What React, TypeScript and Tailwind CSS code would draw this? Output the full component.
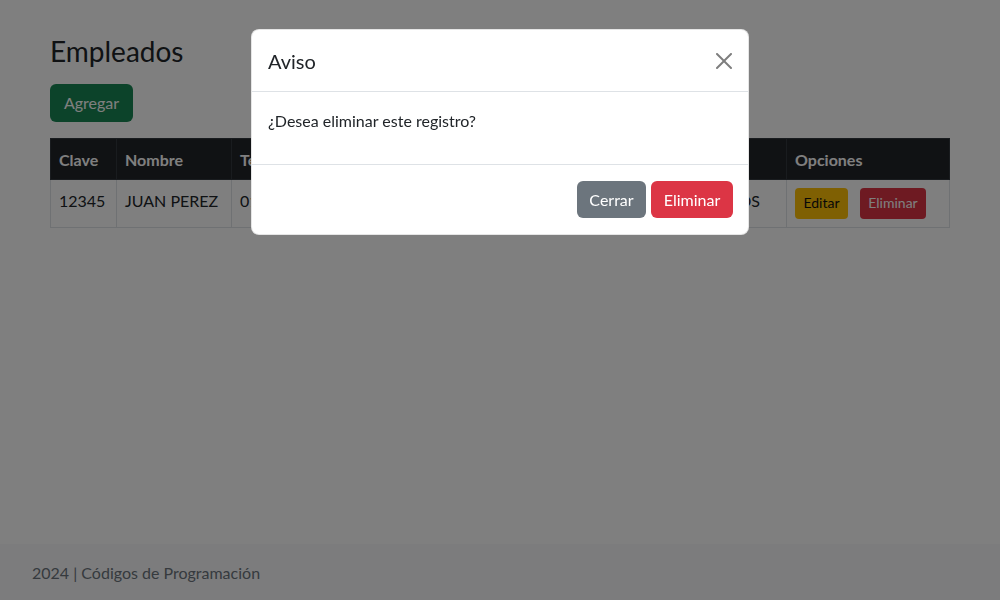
import React from "react";

const empleados = [
  {
    clave: "12345",
    nombre: "JUAN PEREZ",
    telefono: "0123456789",
    correo: "juan@correo.com",
    departamento: "RECURSOS",
  },
];

function CloseIcon() {
  return (
    <svg viewBox="0 0 16 16" className="w-4 h-4" fill="#000">
      <path d="M.293.293a1 1 0 0 1 1.414 0L8 6.586 14.293.293a1 1 0 1 1 1.414 1.414L9.414 8l6.293 6.293a1 1 0 0 1-1.414 1.414L8 9.414l-6.293 6.293a1 1 0 0 1-1.414-1.414L6.586 8 .293 1.707a1 1 0 0 1 0-1.414" />
    </svg>
  );
}

export default function App() {
  return (
    <div className="min-h-[600px] bg-white text-[#212529] font-['Lato',sans-serif] text-base leading-6">
      <main className="w-[900px] mx-auto pt-[35px]">
        <h3 className="text-[28px] leading-[1.2] font-normal mb-[15px]">Empleados</h3>
        <button className="h-[38px] w-[83px] rounded-md bg-[#198754] text-white">
          Agregar
        </button>

        <table className="w-full mt-4 border-collapse border border-[#dee2e6] text-left">
          <thead className="bg-[#212529] text-white">
            <tr className="h-[41px]">
              <th className="w-[66px] px-2 pt-[9px] pb-[7px] border border-[#32383e] font-bold">Clave</th>
              <th className="w-[115px] px-2 pt-[9px] pb-[7px] border border-[#32383e] font-bold">Nombre</th>
              <th className="w-[160px] px-2 pt-[9px] pb-[7px] border border-[#32383e] font-bold">Teléfono</th>
              <th className="w-[200px] px-2 pt-[9px] pb-[7px] border border-[#32383e] font-bold">Correo</th>
              <th className="w-[195px] px-2 pt-[9px] pb-[7px] border border-[#32383e] font-bold">Departamento</th>
              <th className="px-2 pt-[9px] pb-[7px] border border-[#32383e] font-bold">Opciones</th>
            </tr>
          </thead>
          <tbody>
            {empleados.map((e) => (
              <tr key={e.clave} className="h-[47px] align-top">
                <td className="px-2 pt-[9px] border border-[#dee2e6]">{e.clave}</td>
                <td className="px-2 pt-[9px] border border-[#dee2e6]">{e.nombre}</td>
                <td className="px-2 pt-[9px] border border-[#dee2e6]">{e.telefono}</td>
                <td className="px-2 pt-[9px] border border-[#dee2e6]">{e.correo}</td>
                <td className="pl-2 pt-[9px] border border-[#dee2e6] text-right pr-[26px]">{e.departamento}</td>
                <td className="p-2 border border-[#dee2e6]">
                  <div className="flex gap-3">
                    <button className="h-[31px] w-[53px] text-sm rounded bg-[#ffc107] text-[#111]">Editar</button>
                    <button className="h-[31px] w-[66px] text-sm rounded bg-[#dc3545] text-white">Eliminar</button>
                  </div>
                </td>
              </tr>
            ))}
          </tbody>
        </table>
      </main>

      <footer className="fixed bottom-0 inset-x-0 h-14 flex items-center pt-0.5 bg-[#f8f9fa] px-8 text-[#6c757d]">
        2024 | Códigos de Programación
      </footer>

      {/* backdrop */}
      <div className="fixed inset-0 bg-black/50" />

      {/* modal */}
      <div className="fixed left-[251px] top-[29px] w-[498px] bg-white border border-black/10 rounded-lg overflow-hidden">
        <div className="h-[62px] flex items-center justify-between pl-4 pr-[14px] border-b border-[#dee2e6]">
          <h5 className="text-xl leading-[30px] font-normal">Aviso</h5>
          <button className="opacity-50 p-0.5">
            <CloseIcon />
          </button>
        </div>
        <div className="h-[72px] px-4 pt-[17px]">
          <p>¿Desea eliminar este registro?</p>
        </div>
        <div className="flex justify-end gap-[5px] pr-[15px] py-4 border-t border-[#dee2e6]">
          <button className="h-[37px] w-[69px] rounded-md bg-[#6c757d] text-white">Cerrar</button>
          <button className="h-[37px] w-[82px] rounded-md bg-[#dc3545] text-white">Eliminar</button>
        </div>
      </div>
    </div>
  );
}
